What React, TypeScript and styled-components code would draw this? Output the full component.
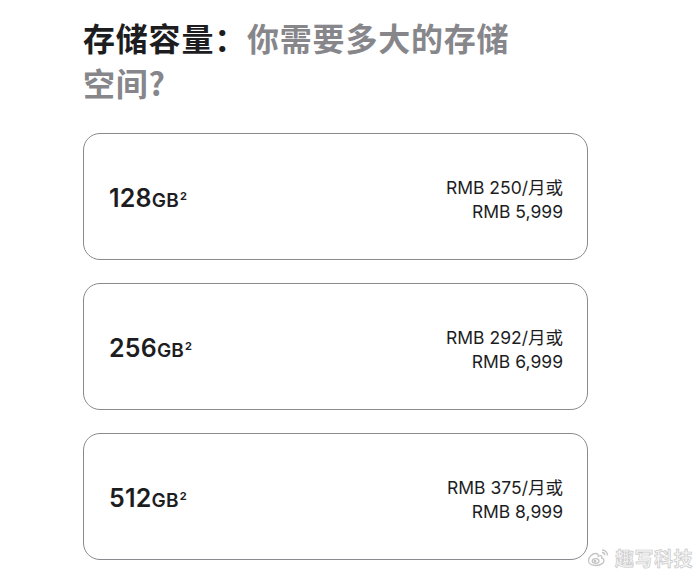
import styled, { createGlobalStyle } from 'styled-components';

const GlobalStyle = createGlobalStyle`
  html, body {
    margin: 0;
    padding: 0;
    background: #fff;
  }
  body {
    font-family: Inter, "Noto Sans CJK SC", sans-serif;
    -webkit-font-smoothing: antialiased;
  }
`;

const Page = styled.div`
  position: relative;
  width: 700px;
  height: 577px;
  overflow: hidden;
  padding: 15px 0 0 83px;
  box-sizing: border-box;
`;

const Title = styled.h1`
  margin: 0;
  width: 440px;
  font-family: "Noto Sans CJK SC", sans-serif;
  font-size: 32px;
  line-height: 45px;
  letter-spacing: 0.8px;
  font-weight: 700;
  color: #86868b;
`;

const TitleStrong = styled.span`
  color: #1d1d1f;
`;

const OptionList = styled.div`
  display: flex;
  flex-direction: column;
  gap: 23px;
  margin-top: 28px;
  width: 505px;
`;

const OptionCard = styled.div`
  display: flex;
  align-items: center;
  justify-content: space-between;
  height: 127px;
  box-sizing: border-box;
  padding: 0 24px 0 25px;
  border: 1.5px solid #8a8a8e;
  border-radius: 17px;
  background: #fff;
`;

const Capacity = styled.div`
  color: #1d1d1f;
  font-family: Inter, sans-serif;
  font-weight: 600;
  font-size: 25px;
  letter-spacing: 0.2px;
  margin-top: 2px;
`;

const Unit = styled.span`
  font-size: 19px;
  font-weight: 600;
  letter-spacing: 0.2px;
`;

const Sup = styled.sup`
  font-size: 11px;
  font-weight: 700;
  vertical-align: 7px;
  line-height: 0;
  margin-left: 1px;
`;

const Price = styled.div`
  text-align: right;
  font-family: Inter, "Noto Sans CJK SC", sans-serif;
  font-size: 17.5px;
  line-height: 24px;
  color: #1d1d1f;
  margin-top: 7px;
`;

const Watermark = styled.div`
  position: absolute;
  right: 7px;
  bottom: 6px;
  display: flex;
  align-items: center;
  gap: 6px;
  font-family: "Noto Sans CJK SC", sans-serif;
  font-size: 19px;
  font-weight: 700;
  color: #f6f6f6;
  -webkit-text-stroke: 0.7px #c8c8c8;
  letter-spacing: 0.5px;
`;

type Option = { size: string; monthly: string; full: string };

const options: Option[] = [
  { size: '128', monthly: '250', full: '5,999' },
  { size: '256', monthly: '292', full: '6,999' },
  { size: '512', monthly: '375', full: '8,999' },
];

const WeiboLogo = () => (
  <svg width="22" height="18" viewBox="0 0 22 18" fill="none" stroke="#c4c4c4" strokeWidth="1.3">
    <path d="M9 4.5C5 4.5 1.5 8 1.5 11.5c0 3 3.3 5 7.5 5 4.8 0 8-2.6 8-5 0-1.6-1.3-2.2-2.4-2.4.6-1.4.3-3-1.8-2.4-.8.2-1.600.6-1.6.6.3-1.6-.4-2.8-2.2-2.8z" />
    <ellipse cx="8.6" cy="12" rx="3.4" ry="2.4" />
    <circle cx="8" cy="12.3" r="0.8" fill="#c4c4c4" />
    <path d="M15 3.5c1.6 0 2.8 1.2 2.8 2.8" />
    <path d="M15 1c3 0 5.5 2.4 5.5 5.4" />
  </svg>
);

export default function App() {
  return (
    <>
      <GlobalStyle />
      <Page>
        <Title>
          <TitleStrong>存储容量：</TitleStrong>你需要多大的存储空间?
        </Title>
        <OptionList>
          {options.map((o) => (
            <OptionCard key={o.size}>
              <Capacity>
                {o.size}
                <Unit>GB</Unit>
                <Sup>2</Sup>
              </Capacity>
              <Price>
                <div>RMB {o.monthly}/月或</div>
                <div>RMB {o.full}</div>
              </Price>
            </OptionCard>
          ))}
        </OptionList>
        <Watermark>
          <WeiboLogo />
          趣写科技
        </Watermark>
      </Page>
    </>
  );
}
